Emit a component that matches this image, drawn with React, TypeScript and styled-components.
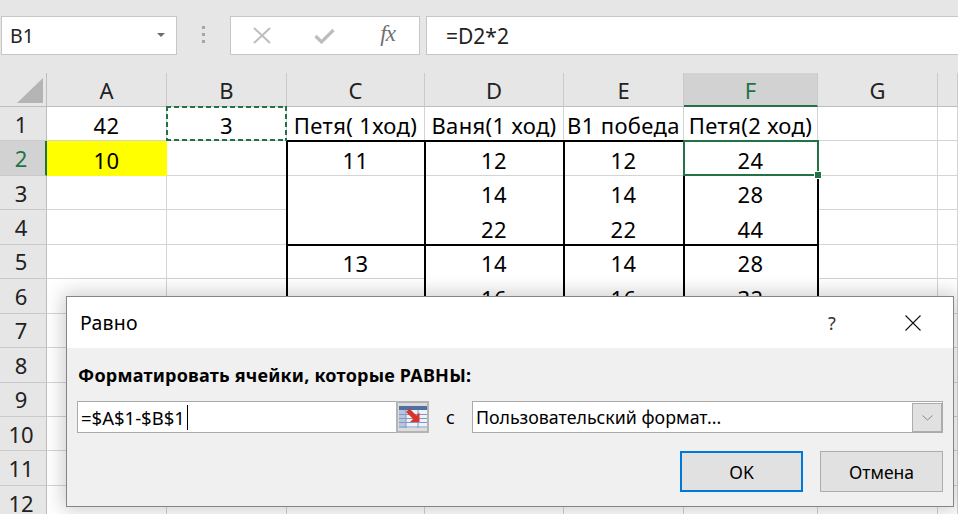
import React from 'react';
import styled, { createGlobalStyle } from 'styled-components';

const GlobalStyle = createGlobalStyle`
  html, body { margin: 0; padding: 0; background: #e6e6e6; }
  body { font-family: "Noto Sans", "Open Sans", sans-serif; color: #000; }
  #root { width: 958px; height: 514px; }
`;

const Screen = styled.div`
  position: relative;
  width: 958px;
  height: 514px;
  overflow: hidden;
  background: #e6e6e6;
  display: flex;
  flex-direction: column;
`;

/* ---------- formula bar ---------- */
const FormulaBar = styled.div`
  display: flex;
  height: 39px;
  padding: 16px 0 18px 1px;
  flex: none;
`;

const NameBox = styled.div`
  box-sizing: border-box;
  width: 176px;
  background: #fff;
  border: 1px solid #c6c6c6;
  display: flex;
  align-items: center;
  justify-content: space-between;
  padding: 0 11px 0 8px;
  font-size: 19.5px;
  color: #222;
`;

const DropTriangle = styled.span`
  width: 0;
  height: 0;
  border-left: 4px solid transparent;
  border-right: 4px solid transparent;
  border-top: 4px solid #6d6d6d;
  margin-top: -2px;
`;

const Splitter = styled.div`
  width: 53px;
  display: flex;
  flex-direction: column;
  align-items: center;
  justify-content: center;
  gap: 4px;
  padding-bottom: 2px;
`;

const Dot = styled.span`
  width: 3px;
  height: 3px;
  background: #a6a6a6;
`;

const FxBox = styled.div`
  box-sizing: border-box;
  width: 190px;
  background: #fff;
  border: 1px solid #c6c6c6;
  display: grid;
  grid-template-columns: repeat(3, 1fr);
  align-items: center;
  justify-items: center;
  margin-right: 6px;
`;

const FxText = styled.span`
  font-family: "Liberation Serif", "DejaVu Serif", serif;
  font-style: italic;
  font-size: 23px;
  color: #707070;
  letter-spacing: -1px;
  margin-top: -3px;
`;

const FormulaInput = styled.div`
  flex: 1;
  box-sizing: border-box;
  background: #fff;
  border: 1px solid #c6c6c6;
  border-right: none;
  display: flex;
  align-items: center;
  padding-left: 19px;
  font-size: 21px;
  color: #222;
`;

/* ---------- sheet ---------- */
const Sheet = styled.div`
  display: grid;
  grid-template-columns: 47px 120px 120px 138px 139px 120px 134px 120px 1fr;
  grid-template-rows: 34px repeat(13, 34.45px);
  background: #fff;
`;

const Corner = styled.div`
  position: relative;
  box-sizing: border-box;
  background: #e6e6e6;
  border-right: 1px solid #bdbdbd;
  border-bottom: 1px solid #bdbdbd;
`;

const CornerTriangle = styled.div`
  position: absolute;
  right: 3px;
  bottom: 3px;
  width: 26px;
  height: 25px;
  background: #b4b4b4;
  clip-path: polygon(100% 0, 100% 100%, 0 100%);
`;

const ColHeader = styled.div<{ $active?: boolean }>`
  box-sizing: border-box;
  background: ${(p) => (p.$active ? '#d2d2d2' : '#e6e6e6')};
  border-right: 1px solid #cacaca;
  border-bottom: ${(p) => (p.$active ? '2px solid #217346' : '1px solid #bdbdbd')};
  color: ${(p) => (p.$active ? '#217346' : '#222')};
  display: flex;
  align-items: center;
  justify-content: center;
  font-size: 22px;
  padding-top: ${(p) => (p.$active ? '1px' : '0')};
`;

const RowHeader = styled.div<{ $active?: boolean }>`
  box-sizing: border-box;
  background: ${(p) => (p.$active ? '#d2d2d2' : '#e6e6e6')};
  border-right: ${(p) => (p.$active ? '2px solid #217346' : '1px solid #bdbdbd')};
  border-bottom: 1px solid #cacaca;
  color: ${(p) => (p.$active ? '#217346' : '#222')};
  display: flex;
  align-items: center;
  justify-content: center;
  padding-right: ${(p) => (p.$active ? '3px' : '4px')};
  font-size: 22px;
  overflow: hidden;
`;

type CellProps = {
  $bg?: string;
  $hideB?: boolean;
  $t?: boolean;
  $l?: boolean;
  $r?: boolean;
};

const Cell = styled.div<CellProps>`
  position: relative;
  box-sizing: border-box;
  min-width: 0;
  background: ${(p) => p.$bg ?? '#fff'};
  border-right: 1px solid ${(p) => p.$bg ?? '#d4d4d4'};
  border-bottom: 1px solid ${(p) => (p.$hideB ? '#fff' : p.$bg ?? '#d4d4d4')};
  display: flex;
  align-items: flex-end;
  justify-content: center;
  padding-bottom: 4px;
  font-size: 22px;
  letter-spacing: 0.35px;
  line-height: 1;
  white-space: nowrap;
  color: #000;

  &::after {
    content: '';
    display: ${(p) => (p.$t || p.$l || p.$r ? 'block' : 'none')};
    position: absolute;
    z-index: 1;
    pointer-events: none;
    top: ${(p) => (p.$t ? '-1px' : '0')};
    bottom: -1px;
    left: ${(p) => (p.$l ? '-1px' : '0')};
    right: ${(p) => (p.$r ? '-2px' : '0')};
    border-top: ${(p) => (p.$t ? '2px solid #000' : 'none')};
    border-left: ${(p) => (p.$l ? '2px solid #000' : 'none')};
    border-right: ${(p) => (p.$r ? '2px solid #000' : 'none')};
  }
`;

const Selection = styled.div`
  position: absolute;
  z-index: 2;
  top: -1px;
  left: -1px;
  right: -2px;
  bottom: -1px;
  border: 2px solid #217346;
`;

const FillHandle = styled.div`
  position: absolute;
  right: -5px;
  bottom: -5px;
  width: 6px;
  height: 6px;
  background: #217346;
  border: 1px solid #fff;
`;

const CopyMarquee = styled.div`
  position: absolute;
  z-index: 2;
  top: -1px;
  left: -1px;
  right: -1px;
  bottom: -1px;
  background:
    repeating-linear-gradient(90deg, #217346 0 5px, transparent 5px 8px) top left / 100% 2px no-repeat,
    repeating-linear-gradient(90deg, #217346 0 5px, transparent 5px 8px) bottom left / 100% 2px no-repeat,
    repeating-linear-gradient(180deg, #217346 0 5px, transparent 5px 8px) top left / 2px 100% no-repeat,
    repeating-linear-gradient(180deg, #217346 0 5px, transparent 5px 8px) top right / 2px 100% no-repeat;
`;

/* ---------- dialog ---------- */
const Dialog = styled.div`
  position: absolute;
  left: 66px;
  top: 296px;
  width: 888px;
  height: 211px;
  box-sizing: border-box;
  border: 1px solid #858585;
  background: #f0f0f0;
  box-shadow: 0 0 18px 3px rgba(0, 0, 0, 0.2);
  display: flex;
  flex-direction: column;
  z-index: 10;
`;

const TitleBar = styled.div`
  height: 51px;
  flex: none;
  background: #fff;
  display: flex;
  align-items: center;
  padding: 0 22px 0 13px;
`;

const Title = styled.div`
  flex: 1;
  font-size: 19.5px;
  letter-spacing: 0.2px;
  color: #000;
`;

const TitleButton = styled.div<{ $gap?: number }>`
  width: 36px;
  height: 36px;
  display: flex;
  align-items: center;
  justify-content: center;
  margin-right: ${(p) => p.$gap ?? 0}px;
  font-size: 18px;
  color: #333;
`;

const Body = styled.div`
  flex: 1;
  display: flex;
  flex-direction: column;
  padding: 15px 10px 0 10px;
`;

const Label = styled.div`
  height: 24px;
  line-height: 24px;
  font-weight: 700;
  font-size: 18px;
  letter-spacing: 0.2px;
  padding-left: 1px;
`;

const InputRow = styled.div`
  display: flex;
  height: 32px;
  margin-top: 14px;
  align-items: stretch;
`;

const RefInput = styled.div`
  box-sizing: border-box;
  width: 319px;
  background: #fff;
  border: 1px solid #ababab;
  border-right: none;
  display: flex;
  align-items: center;
  padding-left: 3px;
  font-size: 18.5px;
`;

const Caret = styled.span`
  display: inline-block;
  width: 1px;
  height: 25px;
  background: #000;
  margin-left: 2px;
`;

const RefButton = styled.div`
  box-sizing: border-box;
  width: 33px;
  border: 2px solid #b4b4b4;
  background: #dcdcdc;
  display: flex;
  align-items: center;
  justify-content: center;
`;

const WithText = styled.div`
  display: flex;
  align-items: center;
  padding: 0 17px;
  font-size: 18px;
`;

const Select = styled.div`
  flex: 1;
  box-sizing: border-box;
  background: #fff;
  border: 1px solid #ababab;
  display: flex;
  align-items: stretch;
  font-size: 17.8px;
`;

const SelectText = styled.div`
  flex: 1;
  display: flex;
  align-items: center;
  padding-left: 3px;
`;

const SelectArrow = styled.div`
  box-sizing: border-box;
  width: 30px;
  margin-top: 1px;
  border: 1px solid #adadad;
  background: #e1e1e1;
  display: flex;
  align-items: center;
  justify-content: center;
`;

const ButtonRow = styled.div`
  display: flex;
  justify-content: flex-end;
  gap: 17px;
  margin-top: 18px;
`;

const Button = styled.div<{ $primary?: boolean }>`
  box-sizing: border-box;
  width: 123px;
  height: 41px;
  background: #e1e1e1;
  border: ${(p) => (p.$primary ? '2px solid #0078d7' : '1px solid #adadad')};
  display: flex;
  align-items: center;
  justify-content: center;
  font-size: 17.5px;
  color: #000;
`;

/* ---------- icons ---------- */
const CancelIcon = () => (
  <svg width="18" height="17" viewBox="0 0 18 17">
    <path d="M1 1 L17 16 M17 1 L1 16" stroke="#bdbdbd" strokeWidth="2" fill="none" />
  </svg>
);

const EnterIcon = () => (
  <svg width="21" height="16" viewBox="0 0 21 16">
    <path d="M1.5 8 L7.5 14 L19.5 2" stroke="#bdbdbd" strokeWidth="3.2" fill="none" />
  </svg>
);

const CloseIcon = () => (
  <svg width="16" height="16" viewBox="0 0 16 16">
    <path d="M0.5 0.5 L15.5 15.5 M15.5 0.5 L0.5 15.5" stroke="#111" strokeWidth="1.1" fill="none" />
  </svg>
);

const ChevronIcon = () => (
  <svg width="11" height="6" viewBox="0 0 11 6">
    <path d="M0.5 0.5 L5.5 5 L10.5 0.5" stroke="#8a8a8a" strokeWidth="1" fill="none" />
  </svg>
);

const RefEditIcon = () => (
  <svg width="28" height="22" viewBox="0 0 28 22">
    <rect x="0" y="0" width="28" height="22" fill="#eef2f8" />
    <rect x="0" y="0" width="7" height="22" fill="#b7c6de" />
    <rect x="0" y="0" width="28" height="4" fill="#4f6fa3" />
    <path d="M0 8.5 H28 M0 12.5 H28 M0 16.5 H28 M0 21 H28" stroke="#8299bf" strokeWidth="1.2" />
    <path d="M7 4 V22 M19 4 V22" stroke="#8299bf" strokeWidth="1" />
    <path
      d="M10.4 2.6 L17.4 9.6 L20.5 6.5 L20.5 16 L11 16 L14.1 12.9 L7.1 5.9 Z"
      fill="#d8342b"
    />
  </svg>
);

/* ---------- data ---------- */
type Spec = {
  v?: string;
  bg?: string;
  hideB?: boolean;
  t?: boolean;
  l?: boolean;
  r?: boolean;
  sel?: boolean;
  copy?: boolean;
};

const COLS = ['A', 'B', 'C', 'D', 'E', 'F', 'G', ''];

const ROWS: Spec[][] = [
  [
    { v: '42' },
    { v: '3', copy: true },
    { v: 'Петя( 1ход)' },
    { v: 'Ваня(1 ход)' },
    { v: 'В1 победа' },
    { v: 'Петя(2 ход)' },
    {},
    {},
  ],
  [
    { v: '10', bg: '#ffff00' },
    {},
    { v: '11', t: true, l: true },
    { v: '12', t: true, l: true },
    { v: '12', t: true, l: true },
    { v: '24', t: true, l: true, r: true, sel: true },
    {},
    {},
  ],
  [
    {},
    {},
    { l: true, hideB: true },
    { v: '14', l: true, hideB: true },
    { v: '14', l: true, hideB: true },
    { v: '28', l: true, r: true, hideB: true },
    {},
    {},
  ],
  [
    {},
    {},
    { l: true },
    { v: '22', l: true },
    { v: '22', l: true },
    { v: '44', l: true, r: true },
    {},
    {},
  ],
  [
    {},
    {},
    { v: '13', t: true, l: true },
    { v: '14', t: true, l: true, hideB: true },
    { v: '14', t: true, l: true, hideB: true },
    { v: '28', t: true, l: true, r: true, hideB: true },
    {},
    {},
  ],
  [
    {},
    {},
    { l: true },
    { v: '16', l: true },
    { v: '16', l: true },
    { v: '32', l: true, r: true },
    {},
    {},
  ],
];

const ALL_ROWS: Spec[][] = [
  ...ROWS,
  ...Array.from({ length: 7 }, () => Array.from({ length: 8 }, () => ({} as Spec))),
];

export default function App() {
  return (
    <Screen>
      <GlobalStyle />
      <FormulaBar>
        <NameBox>
          <span>B1</span>
          <DropTriangle />
        </NameBox>
        <Splitter>
          <Dot />
          <Dot />
          <Dot />
        </Splitter>
        <FxBox>
          <CancelIcon />
          <EnterIcon />
          <FxText>fx</FxText>
        </FxBox>
        <FormulaInput>=D2*2</FormulaInput>
      </FormulaBar>

      <Sheet>
        <Corner>
          <CornerTriangle />
        </Corner>
        {COLS.map((c, i) => (
          <ColHeader key={i} $active={c === 'F'}>
            {c}
          </ColHeader>
        ))}
        {ALL_ROWS.map((row, ri) => (
          <React.Fragment key={ri}>
            <RowHeader $active={ri === 1}>{ri + 1}</RowHeader>
            {row.map((s, ci) => (
              <Cell key={ci} $bg={s.bg} $hideB={s.hideB} $t={s.t} $l={s.l} $r={s.r}>
                {s.v}
                {s.sel && (
                  <Selection>
                    <FillHandle />
                  </Selection>
                )}
                {s.copy && <CopyMarquee />}
              </Cell>
            ))}
          </React.Fragment>
        ))}
      </Sheet>

      <Dialog>
        <TitleBar>
          <Title>Равно</Title>
          <TitleButton $gap={45}>?</TitleButton>
          <TitleButton>
            <CloseIcon />
          </TitleButton>
        </TitleBar>
        <Body>
          <Label>Форматировать ячейки, которые РАВНЫ:</Label>
          <InputRow>
            <RefInput>
              =$A$1-$B$1
              <Caret />
            </RefInput>
            <RefButton>
              <RefEditIcon />
            </RefButton>
            <WithText>с</WithText>
            <Select>
              <SelectText>Пользовательский формат...</SelectText>
              <SelectArrow>
                <ChevronIcon />
              </SelectArrow>
            </Select>
          </InputRow>
          <ButtonRow>
            <Button $primary>OK</Button>
            <Button>Отмена</Button>
          </ButtonRow>
        </Body>
      </Dialog>
    </Screen>
  );
}
